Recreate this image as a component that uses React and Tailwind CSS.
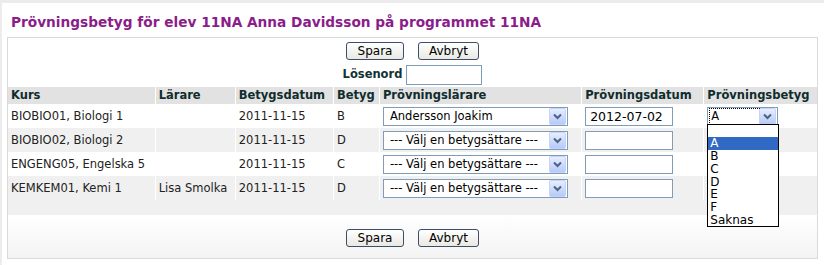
import React from 'react';

const rows = [
    { kurs: 'BIOBIO01, Biologi 1', larare: '', datum: '2011-11-15', betyg: 'B', provLarare: 'Andersson Joakim', provDatum: '2012-07-02' },
    { kurs: 'BIOBIO02, Biologi 2', larare: '', datum: '2011-11-15', betyg: 'D', provLarare: '--- Välj en betygsättare ---', provDatum: '' },
    { kurs: 'ENGENG05, Engelska 5', larare: '', datum: '2011-11-15', betyg: 'C', provLarare: '--- Välj en betygsättare ---', provDatum: '' },
    { kurs: 'KEMKEM01, Kemi 1', larare: 'Lisa Smolka', datum: '2011-11-15', betyg: 'D', provLarare: '--- Välj en betygsättare ---', provDatum: '' },
];

const options = ['A', 'B', 'C', 'D', 'E', 'F', 'Saknas'];

function Arrow() {
    return (
        <div className="w-[17px] h-[17px] shrink-0 flex items-center justify-center rounded-[2px] border border-[#c3d3fd] bg-gradient-to-b from-[#e6eeff] to-[#b7caf5]">
            <svg width="9" height="7" viewBox="0 0 9 7">
                <path d="M1 1.5 L4.5 5 L8 1.5" fill="none" stroke="#4d6185" strokeWidth="2" />
            </svg>
        </div>
    );
}

function Combo({ value, width, focused }) {
    return (
        <div className={`${width} h-[19px] flex items-center bg-white border border-[#7f9db9] pl-[1px] pr-[1px]`}>
            <div className={`flex-1 h-[15px] flex items-center text-[11.5px] text-black ${focused ? 'outline-1 outline-dotted outline-black ml-[1px] pl-[1px]' : 'pl-[5px]'}`}>
                {value}
            </div>
            <Arrow />
        </div>
    );
}

function Btn({ children, width }) {
    return (
        <button className={`${width} h-[18px] rounded-[3px] border border-[#3c4f66] bg-gradient-to-b from-white to-[#e9e8e2] text-[12px] leading-none text-black`}>
            {children}
        </button>
    );
}

export default function App() {
    const cell = 'px-[3px] border-r border-white last:border-r-0';

    return (
        <div className="w-[824px] h-[265px] bg-white border-t-[3px] border-l-[2px] border-[#ececec] overflow-hidden text-[#222]" style={{ fontFamily: '"DejaVu Sans", Verdana, sans-serif' }}>
            <h1 className="pl-[9px] pt-[11px] text-[13.7px] font-bold text-[#8b1d8b] leading-[17px]">
                Prövningsbetyg för elev 11NA Anna Davidsson på programmet 11NA
            </h1>

            <div className="ml-[5px] mt-[6px] w-[811px] h-[222px] border border-[#dadada] flex flex-col">
                <div className="flex justify-center gap-[14px] pt-[4px]">
                    <Btn width="w-[58px]">Spara</Btn>
                    <Btn width="w-[61px]">Avbryt</Btn>
                </div>
                <div className="flex justify-center items-center gap-[4px] mt-[5px]">
                    <span className="text-[11.5px] font-bold text-[#123333]">Lösenord</span>
                    <div className="w-[76px] h-[20px] border border-[#7f9db9] bg-white" />
                </div>

                <table className="mt-[2px] w-full border-collapse table-fixed text-[11.5px]">
                    <colgroup>
                        <col className="w-[147px]" />
                        <col className="w-[80px]" />
                        <col className="w-[98px]" />
                        <col className="w-[46px]" />
                        <col className="w-[202px]" />
                        <col className="w-[122px]" />
                        <col className="w-[113px]" />
                    </colgroup>
                    <thead>
                        <tr className="bg-[#e2e2e2] h-[17px] text-left font-bold text-[#102c2c]">
                            <th className={cell}>Kurs</th>
                            <th className={cell}>Lärare</th>
                            <th className={cell}>Betygsdatum</th>
                            <th className={cell}>Betyg</th>
                            <th className={cell}>Prövningslärare</th>
                            <th className={cell}>Prövningsdatum</th>
                            <th className={`${cell} whitespace-nowrap`}>Prövningsbetyg</th>
                        </tr>
                    </thead>
                    <tbody>
                        {rows.map((r, i) => (
                            <tr key={r.kurs} className={`h-[24px] ${i % 2 ? 'bg-[#f0f0f0]' : 'bg-white'}`}>
                                <td className={cell}>{r.kurs}</td>
                                <td className={cell}>{r.larare}</td>
                                <td className={cell}>{r.datum}</td>
                                <td className={cell}>{r.betyg}</td>
                                <td className={cell}>
                                    <Combo value={r.provLarare} width="w-[185px]" />
                                </td>
                                <td className={cell}>
                                    <div className="w-[88px] h-[19px] border border-[#7f9db9] bg-white pl-[4px] text-[12.5px] leading-[17px] text-black">
                                        {r.provDatum}
                                    </div>
                                </td>
                                <td className={cell}>
                                    {i === 0 && (
                                        <div className="relative w-[71px]">
                                            <Combo value="A" width="w-[71px]" focused />
                                            <ul className="absolute left-0 top-[17px] z-10 w-[72px] border border-black bg-white text-[12px] leading-[12.7px] text-black">
                                                <li className="h-[12.7px]" />
                                                {options.map(o => (
                                                    <li key={o} className={`pl-[2px] ${o === 'A' ? 'bg-[#316ac5] text-white' : ''}`}>{o}</li>
                                                ))}
                                            </ul>
                                        </div>
                                    )}
                                </td>
                            </tr>
                        ))}
                        <tr className="h-[15px] bg-[#f0f0f0]">
                            <td colSpan={7} />
                        </tr>
                    </tbody>
                </table>

                <div className="flex-1 flex justify-center gap-[14px] pt-[14px] bg-gradient-to-b from-white to-[#f3f3f3]">
                    <Btn width="w-[58px]">Spara</Btn>
                    <Btn width="w-[61px]">Avbryt</Btn>
                </div>
            </div>
        </div>
    );
}
